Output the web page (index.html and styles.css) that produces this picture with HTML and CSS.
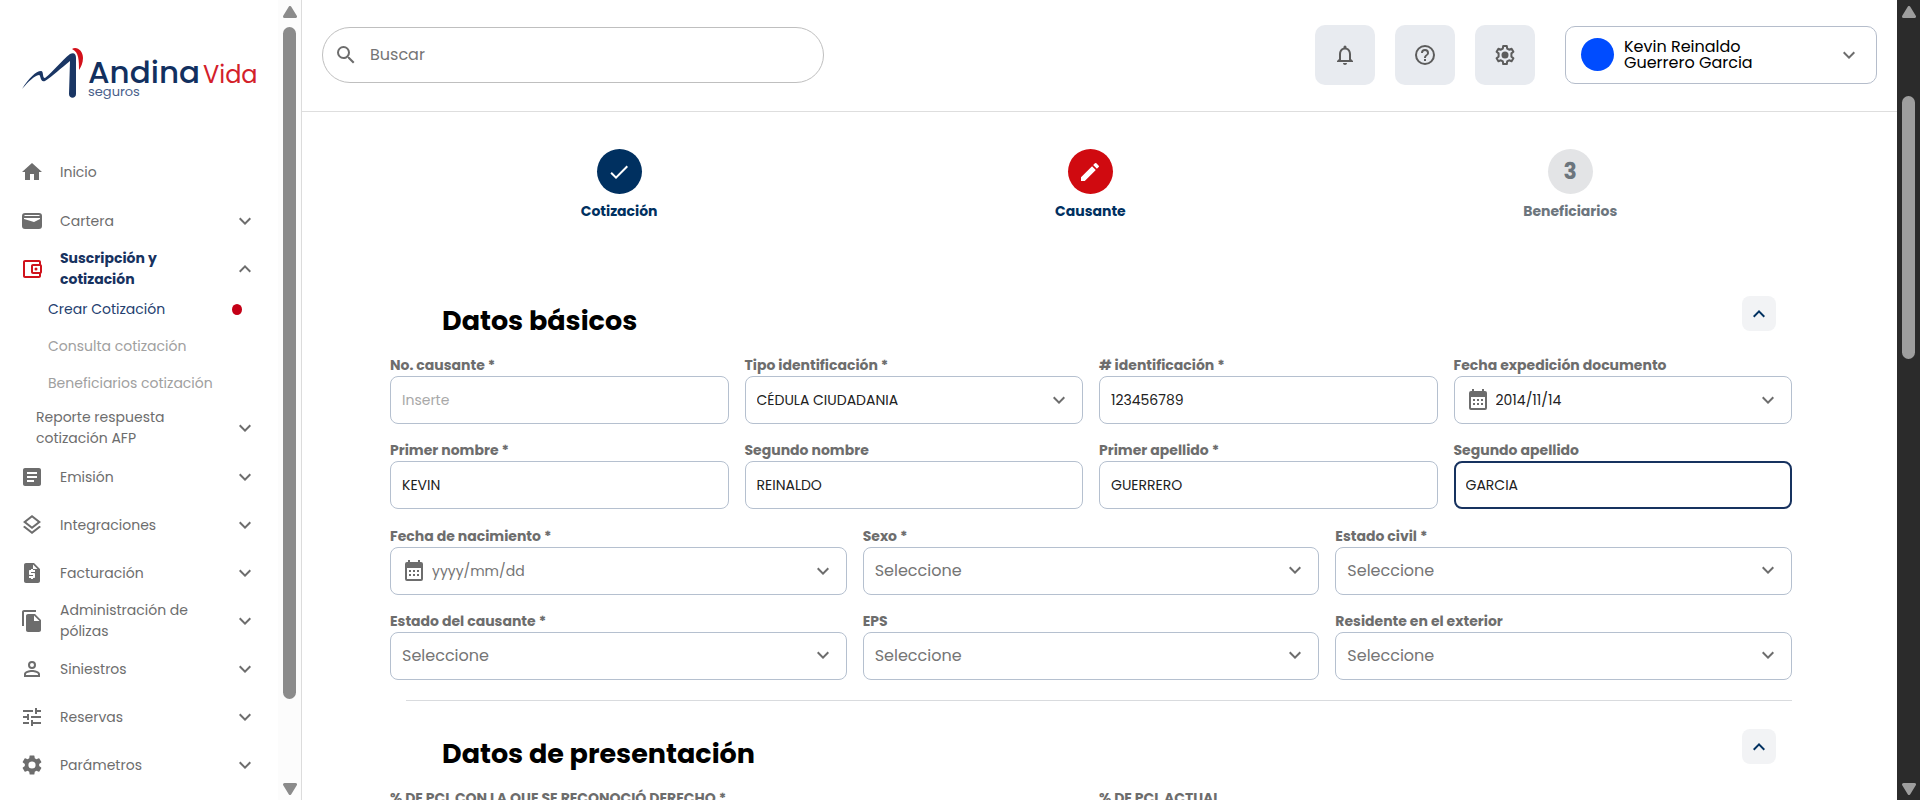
FILE: index.html
```html
<!DOCTYPE html>
<html lang="es">
<head>
<meta charset="utf-8">
<meta name="viewport" content="width=device-width, initial-scale=1">
<title>Crear Cotización</title>
<link rel="stylesheet" href="styles.css">
</head>
<body>
<svg class="sprite" aria-hidden="true">
  <symbol id="down" viewBox="0 0 24 24"><path d="M16.59 8.59 12 13.17 7.41 8.59 6 10l6 6 6-6z"/></symbol>
  <symbol id="up" viewBox="0 0 24 24"><path d="m12 8-6 6 1.41 1.41L12 10.83l4.59 4.58L18 14z"/></symbol>
  <symbol id="calendar" viewBox="0 0 24 24"><path fill-rule="evenodd" d="M19 3h-1V1h-2v2H8V1H6v2H5a2 2 0 0 0-2 2v15a2 2 0 0 0 2 2h14a2 2 0 0 0 2-2V5a2 2 0 0 0-2-2zm0 17H5V9h14zM7 11h2v2H7zm4 0h2v2h-2zm4 0h2v2h-2zM7 15h2v2H7zm4 0h2v2h-2zm4 0h2v2h-2z"/></symbol>
  <symbol id="tri-up" viewBox="0 0 14 12"><path d="M7 1.500 12.500 10.500H1.500z" stroke="currentColor" stroke-width="3" stroke-linejoin="round"/></symbol>
  <symbol id="tri-down" viewBox="0 0 14 12"><path d="M7 10.500 12.500 1.500H1.500z" stroke="currentColor" stroke-width="3" stroke-linejoin="round"/></symbol>
</svg>
<div class="app">
  <aside class="sidebar">
    <div class="sidebar-content">
      <a class="logo" href="#" aria-label="Andina Vida seguros">
        <svg viewBox="0 0 236 56" width="236" height="56">
          <path fill="#1a3664" d="M0 42C7 31 14 24 19 24c3 0 1 7 4 7C31 25 40 13 48 7c4-2 6 0 6 4v36c0 5-7 5-7 0l1-33C39 21 31 29 23 34c-5 2-4-6-6-6C12 29 7 34 0 42z"/>
          <path fill="#d3101a" d="M50 2c5-3 11 2 11 9 0 5-2 9-4 12 0-9 0-18-7-21z"/>
          <text class="logo-name" x="66" y="36">Andina</text>
          <text class="logo-vida" x="181" y="36">Vida</text>
          <text class="logo-sub" x="66" y="49">seguros</text>
        </svg>
      </a>
      <nav class="menu">
        <a class="item first" href="#"><svg class="icon" viewBox="0 0 24 24"><path d="M10 20v-6h4v6h5v-8h3L12 3 2 12h3v8z"/></svg><span>Inicio</span></a>
        <a class="item" href="#"><svg class="icon" viewBox="0 0 24 24"><path fill-rule="evenodd" d="M5 4h14a3 3 0 0 1 3 3v10a3 3 0 0 1-3 3H5a3 3 0 0 1-3-3V7a3 3 0 0 1 3-3zm0 2L4 7h16l-1-1zM4 9v1l10 3 6-3V9z"/></svg><span>Cartera</span><svg class="icon chev"><use href="#down"/></svg></a>
        <a class="item active" href="#"><svg class="icon" viewBox="0 0 24 24"><path d="M21 7.280V5c0-1.100-.9-2-2-2H5c-1.110 0-2 .9-2 2v14c0 1.100.89 2 2 2h14c1.100 0 2-.9 2-2v-2.280c.59-.35 1-.98 1-1.720V9c0-.74-.41-1.380-1-1.720zM20 9v6h-7V9zM5 19V5h14v2h-6c-1.100 0-2 .9-2 2v6c0 1.100.9 2 2 2h6v2z"/><circle cx="16" cy="12" r="1.500"/></svg><span>Suscripción y cotización</span><svg class="icon chev"><use href="#up"/></svg></a>
        <div class="submenu">
          <a class="subitem current" href="#">Crear Cotización<i class="dot"></i></a>
          <a class="subitem" href="#">Consulta cotización</a>
          <a class="subitem" href="#">Beneficiarios cotización</a>
        </div>
        <a class="item nested" href="#"><span>Reporte respuesta cotización AFP</span><svg class="icon chev"><use href="#down"/></svg></a>
        <a class="item" href="#"><svg class="icon" viewBox="0 0 24 24"><path d="M19 3H5c-1.100 0-2 .9-2 2v14c0 1.100.9 2 2 2h14c1.100 0 2-.9 2-2V5c0-1.100-.9-2-2-2zm-5 14H7v-2h7zm3-4H7v-2h10zm0-4H7V7h10z"/></svg><span>Emisión</span><svg class="icon chev"><use href="#down"/></svg></a>
        <a class="item" href="#"><svg class="icon" viewBox="0 0 24 24"><path d="m11.990 18.540-7.370-5.730L3 14.070l9 7 9-7-1.630-1.270zM12 16l7.360-5.730L21 9l-9-7-9 7 1.630 1.270zm0-11.470L17.740 9 12 13.470 6.260 9z"/></svg><span>Integraciones</span><svg class="icon chev"><use href="#down"/></svg></a>
        <a class="item" href="#"><svg class="icon" viewBox="0 0 24 24"><path d="M14 2H6c-1.100 0-1.990.9-1.990 2L4 20c0 1.100.89 2 1.990 2H18c1.100 0 2-.9 2-2V8zm1 9h-4v1h3c.55 0 1 .45 1 1v3c0 .55-.45 1-1 1h-1v1h-2v-1H9v-2h4v-1h-3c-.55 0-1-.45-1-1v-3c0-.55.45-1 1-1h1V8h2v1h2zm-2-3V3.500L17.500 8z"/></svg><span>Facturación</span><svg class="icon chev"><use href="#down"/></svg></a>
        <a class="item" href="#"><svg class="icon" viewBox="0 0 24 24"><path d="M16 1H4c-1.100 0-2 .9-2 2v14h2V3h12zm-1 4 6 6v10c0 1.100-.9 2-2 2H7.990C6.890 23 6 22.100 6 21l.01-14c0-1.100.89-2 1.990-2zm-1 7h5.500L14 6.500z"/></svg><span>Administración de pólizas</span><svg class="icon chev"><use href="#down"/></svg></a>
        <a class="item" href="#"><svg class="icon" viewBox="0 0 24 24"><path fill-rule="evenodd" d="M12 4a4 4 0 1 0 0 8 4 4 0 0 0 0-8zm0 2a2 2 0 1 1 0 4 2 2 0 0 1 0-4zm0 7c-2.670 0-8 1.340-8 4v3h16v-3c0-2.660-5.330-4-8-4zm0 2c2.970 0 6 1.400 6 2v1H6v-1c0-.6 3.030-2 6-2z"/></svg><span>Siniestros</span><svg class="icon chev"><use href="#down"/></svg></a>
        <a class="item" href="#"><svg class="icon" viewBox="0 0 24 24"><path d="M3 17v2h6v-2zM3 5v2h10V5zm10 16v-2h8v-2h-8v-2h-2v6zM7 9v2H3v2h4v2h2V9zm14 4v-2H11v2zm-6-4h2V7h4V5h-4V3h-2z"/></svg><span>Reservas</span><svg class="icon chev"><use href="#down"/></svg></a>
        <a class="item" href="#"><svg class="icon" viewBox="0 0 24 24"><path d="M19.140 12.940c.04-.3.060-.61.060-.94 0-.32-.02-.64-.07-.94l2.030-1.580a.49.49 0 0 0 .12-.61l-1.920-3.320a.488.488 0 0 0-.59-.22l-2.390.96c-.5-.38-1.030-.7-1.620-.94l-.36-2.540a.484.484 0 0 0-.48-.41h-3.840c-.24 0-.43.17-.47.41l-.36 2.540c-.59.24-1.130.57-1.620.94l-2.390-.96c-.22-.08-.47 0-.59.22L2.740 8.870c-.12.21-.08.47.12.61l2.030 1.580c-.05.3-.09.63-.09.940s.02.64.07.94l-2.030 1.580a.49.49 0 0 0-.12.61l1.920 3.320c.12.22.37.29.59.22l2.390-.96c.5.38 1.030.7 1.620.94l.36 2.540c.05.24.24.41.48.41h3.840c.24 0 .44-.17.47-.41l.36-2.540c.59-.24 1.130-.56 1.620-.94l2.390.96c.22.08.47 0 .59-.22l1.920-3.320c.12-.22.07-.47-.12-.61zM12 15.600A3.600 3.600 0 1 1 12 8.400a3.600 3.600 0 0 1 0 7.200z"/></svg><span>Parámetros</span><svg class="icon chev"><use href="#down"/></svg></a>
      </nav>
    </div>
    <div class="scrollbar light"><svg class="tri"><use href="#tri-up"/></svg><div class="track side-track"><div class="thumb"></div></div><svg class="tri"><use href="#tri-down"/></svg></div>
  </aside>

  <div class="page">
    <header class="topbar">
      <label class="search"><svg class="icon" viewBox="0 0 24 24"><path d="M15.500 14h-.79l-.28-.27A6.471 6.471 0 0 0 16 9.500 6.500 6.500 0 1 0 9.500 16c1.610 0 3.090-.59 4.230-1.570l.27.28v.79l5 4.990L20.490 19zm-6 0C7.010 14 5 11.990 5 9.500S7.010 5 9.500 5 14 7.010 14 9.500 11.990 14 9.500 14z"/></svg><input type="search" placeholder="Buscar" aria-label="Buscar"></label>
      <div class="actions">
        <button class="square" aria-label="Notificaciones"><svg class="icon" viewBox="0 0 24 24"><path d="M12 22c1.100 0 2-.9 2-2h-4c0 1.100.9 2 2 2zm6-6v-5c0-3.070-1.630-5.640-4.500-6.320V4a1.500 1.500 0 0 0-3 0v.68C7.640 5.360 6 7.920 6 11v5l-2 2v1h16v-1zm-2 1H8v-6c0-2.480 1.510-4.500 4-4.500s4 2.020 4 4.500z"/></svg></button>
        <button class="square" aria-label="Ayuda"><svg class="icon" viewBox="0 0 24 24"><path d="M11 18h2v-2h-2zm1-16a10 10 0 1 0 0 20 10 10 0 0 0 0-20zm0 18a8 8 0 1 1 0-16 8 8 0 0 1 0 16zm0-14a4 4 0 0 0-4 4h2c0-1.100.9-2 2-2s2 .9 2 2c0 2-3 1.750-3 5h2c0-2.250 3-2.500 3-5a4 4 0 0 0-4-4z"/></svg></button>
        <button class="square" aria-label="Configuración"><svg class="icon" viewBox="0 0 24 24"><path fill="none" stroke="currentColor" stroke-width="2" stroke-linejoin="round" d="M10.200 3h3.600l.4 2.600 1.900 1.100 2.500-1 1.800 3.100-2 1.600v3.200l2 1.600-1.800 3.100-2.500-1-1.900 1.100-.4 2.600h-3.600l-.4-2.600-1.900-1.100-2.500 1-1.800-3.100 2-1.600v-3.200l-2-1.600 1.800-3.100 2.500 1 1.900-1.100z"/><circle cx="12" cy="12" r="3.500"/></svg></button>
        <button class="profile"><span class="avatar"></span><span class="who">Kevin Reinaldo Guerrero Garcia</span><svg class="icon chev"><use href="#down"/></svg></button>
      </div>
    </header>

    <main class="content">
      <ol class="steps">
        <li class="step"><span class="bullet done"><svg class="icon" viewBox="0 0 24 24"><path d="M9 16.170 4.830 12l-1.420 1.410L9 19 21 7l-1.410-1.410z"/></svg></span>Cotización</li>
        <li class="step"><span class="bullet now"><svg class="icon" viewBox="0 0 24 24"><path d="M3 17.250V21h3.750L17.810 9.940l-3.750-3.750zM20.710 7.040a1 1 0 0 0 0-1.410l-2.340-2.340a1 1 0 0 0-1.410 0l-1.830 1.830 3.750 3.750z"/></svg></span>Causante</li>
        <li class="step pending"><span class="bullet">3</span>Beneficiarios</li>
      </ol>

      <form class="form">
        <section>
          <div class="section-head"><h2>Datos básicos</h2><button type="button" class="toggle" aria-label="Contraer Datos básicos"><svg class="icon"><use href="#up"/></svg></button></div>
          <div class="grid four">
            <div class="field"><label for="no">No. causante *</label><div class="box"><input id="no" type="text" placeholder="Inserte"></div></div>
            <div class="field"><label for="tipo">Tipo identificación *</label><div class="box"><select id="tipo"><option>CÉDULA CIUDADANIA</option></select><svg class="icon chev"><use href="#down"/></svg></div></div>
            <div class="field"><label for="ident"># identificación *</label><div class="box"><input id="ident" type="text" value="123456789"></div></div>
            <div class="field"><label for="exp">Fecha expedición documento</label><div class="box date"><svg class="icon"><use href="#calendar"/></svg><input id="exp" type="text" value="2014/11/14"><svg class="icon chev"><use href="#down"/></svg></div></div>
            <div class="field"><label for="n1">Primer nombre *</label><div class="box"><input id="n1" type="text" value="KEVIN"></div></div>
            <div class="field"><label for="n2">Segundo nombre</label><div class="box"><input id="n2" type="text" value="REINALDO"></div></div>
            <div class="field"><label for="a1">Primer apellido *</label><div class="box"><input id="a1" type="text" value="GUERRERO"></div></div>
            <div class="field"><label for="a2">Segundo apellido</label><div class="box focused"><input id="a2" type="text" value="GARCIA"></div></div>
          </div>
          <div class="grid three">
            <div class="field"><label for="nac">Fecha de nacimiento *</label><div class="box date"><svg class="icon"><use href="#calendar"/></svg><input id="nac" type="text" placeholder="yyyy/mm/dd"><svg class="icon chev"><use href="#down"/></svg></div></div>
            <div class="field"><label for="sexo">Sexo *</label><div class="box unset"><select id="sexo"><option>Seleccione</option></select><svg class="icon chev"><use href="#down"/></svg></div></div>
            <div class="field"><label for="civil">Estado civil *</label><div class="box unset"><select id="civil"><option>Seleccione</option></select><svg class="icon chev"><use href="#down"/></svg></div></div>
            <div class="field"><label for="estado">Estado del causante *</label><div class="box unset"><select id="estado"><option>Seleccione</option></select><svg class="icon chev"><use href="#down"/></svg></div></div>
            <div class="field"><label for="eps">EPS</label><div class="box unset"><select id="eps"><option>Seleccione</option></select><svg class="icon chev"><use href="#down"/></svg></div></div>
            <div class="field"><label for="ext">Residente en el exterior</label><div class="box unset"><select id="ext"><option>Seleccione</option></select><svg class="icon chev"><use href="#down"/></svg></div></div>
          </div>
        </section>
        <hr class="divider">
        <section>
          <div class="section-head"><h2>Datos de presentación</h2><button type="button" class="toggle" aria-label="Contraer Datos de presentación"><svg class="icon"><use href="#up"/></svg></button></div>
          <div class="grid two">
            <div class="field"><label for="pcl1">% DE PCL CON LA QUE SE RECONOCIÓ DERECHO *</label><div class="box"><input id="pcl1" type="text"></div></div>
            <div class="field"><label for="pcl2">% DE PCL ACTUAL</label><div class="box"><input id="pcl2" type="text"></div></div>
          </div>
        </section>
      </form>
    </main>
  </div>
  <div class="scrollbar dark"><svg class="tri"><use href="#tri-up"/></svg><div class="track page-track"><div class="thumb"></div></div><svg class="tri"><use href="#tri-down"/></svg></div>
</div>
</body>
</html>
```
FILE: styles.css
```css
* { box-sizing: border-box; }

body {
  margin: 0;
  font-family: Poppins, Inter, "Open Sans", sans-serif;
  font-size: 14px;
  line-height: 21px;
  color: #6d6d6d;
  background: #fff;
}

a { color: inherit; text-decoration: none; }
button, input, select { font: inherit; color: inherit; }

.sprite { display: none; }
.icon { flex: none; width: 24px; height: 24px; fill: currentColor; }

.app { display: flex; height: 100vh; overflow: hidden; }

/* Sidebar */
.sidebar { display: flex; flex: none; width: 302px; border-right: 1px solid #dcdcdc; }
.sidebar-content { flex: 1; overflow: hidden; }
.logo { display: block; padding: 47px 0 0 22px; }
.logo svg { display: block; overflow: visible; }
.logo-name { font-size: 31px; font-weight: 500; fill: #12305f; }
.logo-vida { font-size: 24px; fill: #d3202a; }
.logo-sub { font-size: 13px; fill: #48608a; }

.menu { padding-top: 45px; }
.item { display: flex; align-items: center; gap: 16px; min-height: 48px; padding: 0 21px 0 20px; }
.item span { flex: 1; padding-right: 24px; }
.item.first { margin-bottom: 1px; }
.item.active { color: #d0121b; }
.item.active span { font-weight: 700; color: #17325f; }
.item.active .chev { color: #6d6d6d; }
.item.nested { margin-bottom: 1px; padding-left: 36px; }
.submenu { margin: -2px 0 2px; }
.subitem { display: flex; align-items: center; justify-content: space-between; height: 37px; padding: 0 36px 0 48px; color: #a0a0a0; }
.subitem.current { color: #24406f; }
.dot { width: 10px; height: 11px; border-radius: 50%; background: #c40016; }

/* Scrollbars */
.scrollbar { display: flex; flex: none; flex-direction: column; align-items: center; gap: 9px; width: 23px; padding: 6px 0 5px; }
.scrollbar.light { color: #8b8b8b; background: #fcfcfc; }
.scrollbar.dark { color: #9e9e9e; background: #2b2b2b; }
.tri { flex: none; width: 14px; height: 12px; fill: currentColor; }
.track { display: grid; flex: 1; width: 13px; }
.side-track { grid-template-rows: 0fr 90fr 10fr; }
.page-track { grid-template-rows: 93fr 352fr 555fr; }
.thumb { grid-row: 2; border-radius: 7px; background: currentColor; }

/* Top bar */
.page { display: flex; flex: 1; flex-direction: column; min-width: 0; }
.topbar { display: flex; flex: none; align-items: center; justify-content: space-between; height: 112px; padding: 0 20px 2px; border-bottom: 1px solid #dedede; }
.search { display: flex; align-items: center; gap: 12px; width: 502px; height: 56px; padding: 0 11px; border: 1px solid #bfbfbf; border-radius: 28px; }
.search input { flex: 1; min-width: 0; padding: 0; border: 0; outline: 0; background: none; font-size: 16px; }
.actions { display: flex; align-items: center; gap: 20px; }
.square { display: grid; place-items: center; width: 60px; height: 60px; padding: 0; border: 0; border-radius: 10px; background: #e8ebf0; color: #5c5c5c; }
.profile { display: flex; align-items: center; gap: 10px; width: 312px; height: 58px; margin-left: 10px; padding: 0 15px; border: 1px solid #b5bdcb; border-radius: 10px; background: #fff; color: #6d6d6d; text-align: left; }
.avatar { flex: none; width: 33px; height: 33px; border-radius: 50%; background: #004cff; }
.who { flex: 1; padding-right: 60px; font-size: 16px; line-height: 16px; color: #000; }

/* Stepper */
.content { padding: 37px 105px 0 88px; }
.steps { display: flex; justify-content: space-around; margin: 0 -24px 0 -8px; padding: 0; list-style: none; }
.step { display: flex; flex-direction: column; align-items: center; gap: 7px; font-weight: 700; color: #003060; }
.bullet { display: grid; place-items: center; width: 45px; height: 45px; border-radius: 50%; background: #e3e4e6; color: #6c757d; font-size: 22px; }
.bullet.done { background: #003060; color: #fff; }
.bullet.now { background: #d00a10; color: #fff; }
.step.pending { color: #6c757d; }

/* Form */
.form { padding-top: 74px; }
.section-head { display: flex; align-items: flex-start; justify-content: space-between; height: 59px; padding: 0 16px 0 52px; }
.section-head h2 { margin: 7px 0 0; font-size: 27px; line-height: 36px; font-weight: 700; color: #000; }
.toggle { display: grid; place-items: center; width: 34px; height: 35px; padding: 0; border: 0; border-radius: 8px; background: #f2f3f5; color: #003060; }
.grid { display: grid; gap: 16px; margin-bottom: 17px; }
.four { grid-template-columns: repeat(4, minmax(0, 1fr)); }
.three { grid-template-columns: repeat(3, minmax(0, 1fr)); }
.two { grid-template-columns: repeat(2, minmax(0, 1fr)); }
.field label { display: block; font-weight: 700; white-space: nowrap; }
.box { display: flex; align-items: center; height: 48px; padding: 0 11px; border: 1px solid #b5c0cf; border-radius: 8px; color: #6d6d6d; }
.box.date { gap: 6px; }
.box.focused { padding: 0 10px; border: 2px solid #17325f; }
.box input, .box select { flex: 1; min-width: 0; padding: 0; border: 0; outline: 0; background: none; color: #212121; }
.box select { appearance: none; }
.box .chev { pointer-events: none; }
.box ::placeholder { color: #a8a8a8; opacity: 1; }
.box.date ::placeholder { color: #757575; }
.box.unset { padding-bottom: 2px; }
.box.unset select { font-size: 16px; color: #757575; }
.divider { height: 1px; margin: 20px 0 28px 16px; border: 0; background: #d9dbde; }
```
